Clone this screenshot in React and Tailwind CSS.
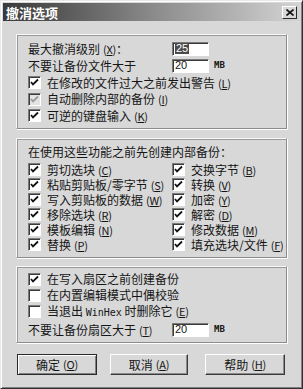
import React from "react";

const FONT = { fontFamily: '"Noto Sans CJK SC", "Noto Sans", sans-serif' };
const MONO = { fontFamily: '"DejaVu Sans Mono", monospace' };

/* ---------- small pieces ---------- */
function Key({ k }) {
  return (
    <span className="text-[11px] tracking-tight ml-[3px]">
      (<u>{k}</u>)
    </span>
  );
}

function Box({ checked = true, disabled = false }) {
  return (
    <span
      className={`w-[13px] h-[13px] shrink-0 flex items-center justify-center border border-t-[#7a7a7a] border-l-[#7a7a7a] border-b-white border-r-white shadow-[inset_1px_1px_0_#3a3a3a] ${
        disabled ? "bg-[#e4e4e4]" : "bg-white"
      }`}
    >
      {checked && (
        <svg width="9" height="9" viewBox="0 0 9 9">
          <path
            d="M1 4 L3 6.5 L8 1.5"
            fill="none"
            stroke={disabled ? "#9a9a9a" : "#111"}
            strokeWidth="1.8"
          />
        </svg>
      )}
    </span>
  );
}

function Check({ label, k, checked, disabled, h = "h-[16px]" }) {
  return (
    <div className={`flex items-center ${h} gap-[6px] overflow-hidden`}>
      <Box checked={checked} disabled={disabled} />
      <span className="whitespace-nowrap">
        {label}
        {k && <Key k={k} />}
      </span>
    </div>
  );
}

function Field({ value, selected }) {
  return (
    <div
      className="w-[37px] h-[14px] bg-white border border-t-[#7a7a7a] border-l-[#7a7a7a] border-b-white border-r-white shadow-[inset_1px_1px_0_#3a3a3a] flex items-center pl-[2px] text-[11px] leading-none"
      style={{ fontFamily: '"Liberation Sans", sans-serif' }}
    >
      <span className={selected ? "bg-[#4a4a4a] text-white px-[1px]" : ""}>{value}</span>
    </div>
  );
}

function Group({ children, className = "" }) {
  return (
    <div
      className={`border border-t-[#f8f8f8] border-l-[#f8f8f8] border-b-[#8c8c8c] border-r-[#8c8c8c] shadow-[1px_1px_0_#ffffff,inset_1px_1px_0_#9a9a9a] pl-[11px] ${className}`}
    >
      {children}
    </div>
  );
}

function Button({ children, def, w }) {
  return (
    <div
      className={`${w} h-[21px] flex items-center justify-center bg-[#d8d8d8] border ${
        def
          ? "border-[#2a2a2a] shadow-[inset_1px_1px_0_#ffffff,inset_-1px_-1px_0_#808080]"
          : "border-t-white border-l-white border-b-[#3a3a3a] border-r-[#3a3a3a] shadow-[inset_-1px_-1px_0_#8a8a8a]"
      }`}
    >
      {children}
    </div>
  );
}

const left = [
  ["剪切选块", "C"],
  ["粘贴剪贴板/零字节", "S"],
  ["写入剪贴板的数据", "W"],
  ["移除选块", "R"],
  ["模板编辑", "N"],
  ["替换", "P"],
];
const right = [
  ["交换字节", "B"],
  ["转换", "V"],
  ["加密", "Y"],
  ["解密", "D"],
  ["修改数据", "M"],
  ["填充选块/文件", "F"],
];

export default function App() {
  return (
    <div
      className="w-[303px] h-[389px] bg-[#d8d8d8] text-[12px] text-[#151515] leading-none border border-t-[#e8e8e8] border-l-[#e8e8e8] border-b-[#303030] border-r-[#303030] shadow-[inset_1px_1px_0_#ffffff,inset_-1px_-1px_0_#808080] p-[2px] flex flex-col"
      style={FONT}
    >
      {/* Title bar */}
      <div className="h-[18px] flex items-center justify-between bg-gradient-to-r from-[#3a3a3a] via-[#8a8a8a] to-[#d4d4d4] pl-[3px] pr-[3px]">
        <span className="text-white font-bold text-[13px]">撤消选项</span>
        <div className="w-[15px] h-[13px] bg-[#d8d8d8] border border-t-white border-l-white border-b-[#2a2a2a] border-r-[#2a2a2a] flex items-center justify-center">
          <svg width="8" height="7" viewBox="0 0 8 7">
            <path d="M0.5 0.5 L7.5 6.5 M7.5 0.5 L0.5 6.5" stroke="#111" strokeWidth="1.6" />
          </svg>
        </div>
      </div>

      <div className="flex flex-col px-[13px] pt-[13px]">
        {/* Group 1 */}
        <Group className="h-[95px] pt-[5px] flex flex-col">
          <div className="flex items-center h-[17px]">
            <span className="w-[144px]">
              最大撤消级别<Key k="X" />：
            </span>
            <Field value="25" selected />
          </div>
          <div className="flex items-center h-[17px]">
            <span className="w-[144px]">不要让备份文件大于</span>
            <Field value="20" />
            <span className="ml-[5px] text-[9px] font-bold" style={MONO}>MB</span>
          </div>
          <Check label="在修改的文件过大之前发出警告" k="L" checked h="h-[17px]" />
          <Check label="自动删除内部的备份" k="I" checked disabled />
          <Check label="可逆的键盘输入" k="K" checked h="h-[17px]" />
        </Group>

        {/* Group 2 */}
        <Group className="h-[120px] mt-[9px] pt-[5px]">
          <div className="h-[16px] flex items-center">在使用这些功能之前先创建内部备份：</div>
          <div className="flex mt-[2px]">
            <div className="w-[144px] flex flex-col">
              {left.map(([l, k]) => (
                <Check key={l} label={l} k={k} checked h="h-[15px]" />
              ))}
            </div>
            <div className="flex flex-col">
              {right.map(([l, k]) => (
                <Check key={l} label={l} k={k} checked h="h-[15px]" />
              ))}
            </div>
          </div>
        </Group>

        {/* Group 3 */}
        <Group className="h-[77px] mt-[8px] pt-[4px] flex flex-col">
          <Check label="在写入扇区之前创建备份" checked />
          <Check label="在内置编辑模式中偶校验" checked={false} />
          <Check
            label={
              <>
                当退出 <span style={MONO} className="text-[10px]">WinHex</span> 时删除它
              </>
            }
            k="E"
            checked={false}
          />
          <div className="flex items-center h-[19px] mt-[1px]">
            <span className="w-[144px]">
              不要让备份扇区大于<Key k="T" />
            </span>
            <Field value="20" />
            <span className="ml-[5px] text-[9px] font-bold" style={MONO}>MB</span>
          </div>
        </Group>

        {/* Buttons */}
        <div className="flex mt-[11px] pl-[1px]">
          <Button def w="w-[80px]">
            确定<Key k="O" />
          </Button>
          <div className="w-[13px]" />
          <Button w="w-[78px]">
            取消<Key k="A" />
          </Button>
          <div className="w-[17px]" />
          <Button w="w-[80px]">
            帮助<Key k="H" />
          </Button>
        </div>
      </div>
    </div>
  );
}
